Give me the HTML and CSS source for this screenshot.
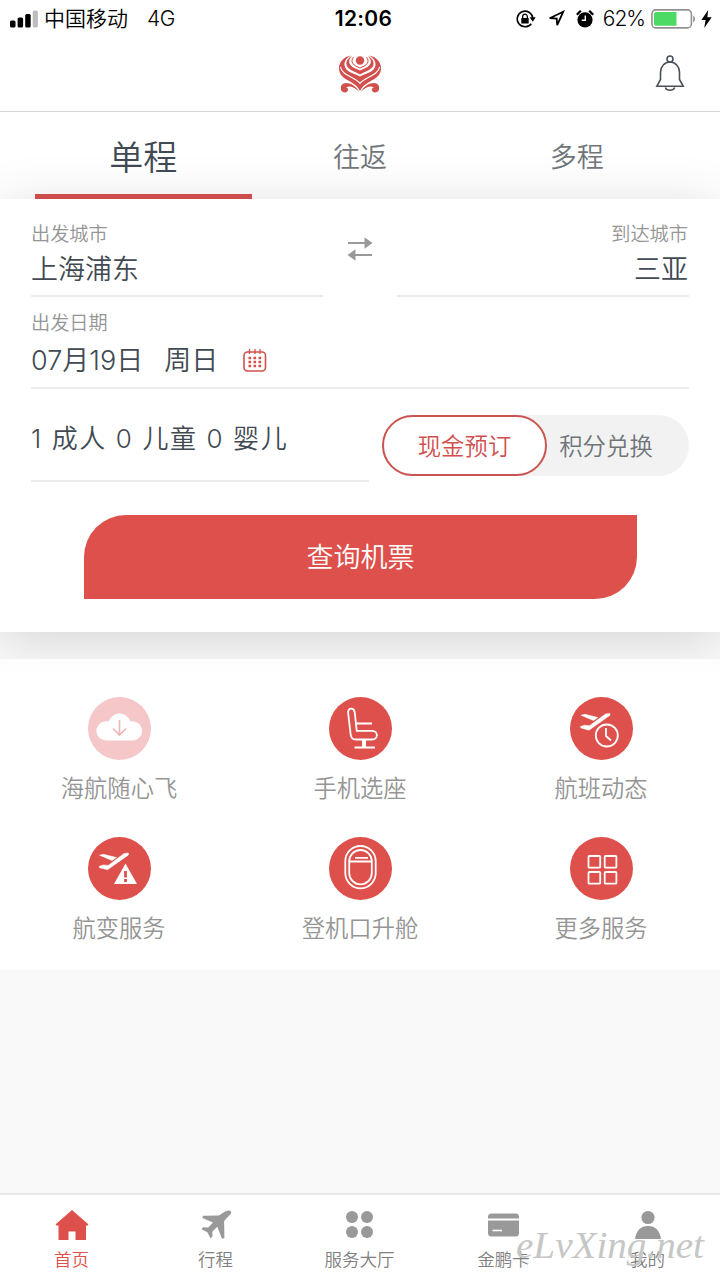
FILE: index.html
```html
<!DOCTYPE html>
<html lang="zh-CN">
<head>
<meta charset="utf-8">
<title>机票预订</title>
<link rel="stylesheet" href="styles.css">
</head>
<body>
<div class="app">
  <div class="status">
    <div class="status-left">
      <svg class="signal" width="28" height="18" viewBox="0 0 28 18"><rect x="0" y="10.5" width="5.5" height="7" rx="1.6"/><rect x="7.6" y="7.5" width="5.5" height="10" rx="1.6"/><rect x="15.2" y="4" width="5.5" height="13.5" rx="1.6"/><rect x="22.7" y="0.5" width="5.2" height="17" rx="1.6" fill="#bdbdbd"/></svg>
      <span class="carrier">中国移动</span>
      <span class="network">4G</span>
    </div>
    <div class="time">12:06</div>
    <div class="status-right">
      <svg width="20" height="18" viewBox="0 0 20 18" fill="none" stroke="#000" stroke-width="1.6"><path d="M15.3 13.7A7.8 7.8 0 1 1 16.8 8"/><path d="M13.7 7.3h6l-3 4.4z" fill="#000" stroke="none"/><rect x="5.3" y="8" width="7.4" height="5.6" rx=".6" fill="#000" stroke="none"/><path d="M6.7 8.2V6.5a2.3 2.3 0 0 1 4.6 0v1.7" stroke-width="1.3"/></svg>
      <svg class="locate" width="17" height="17" viewBox="0 0 17 17" fill="none" stroke="#000" stroke-width="1.8"><path d="M1.7 8.2 15.2 1.8 9.2 15.2 8.7 8.5z"/></svg>
      <svg class="alarm" width="18" height="18" viewBox="0 0 18 18"><circle cx="9" cy="9.8" r="7.6"/><path d="M.8 4.8 4.8.8M13.2.8l4 4" stroke="#000" stroke-width="2.3"/><path d="M9.3 5.5v4.8H5.8" fill="none" stroke="#fff" stroke-width="1.4"/></svg>
      <span class="percent">62%</span>
      <svg class="battery" width="45" height="20" viewBox="0 0 45 20"><rect x=".9" y=".9" width="39.5" height="18" rx="4" fill="#fff" stroke="#929292" stroke-width="1.6"/><path d="M5 3h20.5v13.7H5a2 2 0 0 1-2-2V5a2 2 0 0 1 2-2z" fill="#4cd964"/><path d="M42.2 6.5a4.2 4.2 0 0 1 0 7z" fill="#929292"/></svg>
      <svg width="11" height="18" viewBox="0 0 11 18"><path d="M7.2 0 .4 10h4.2L3.2 18 10.7 7.3H6.3z"/></svg>
    </div>
  </div>
  <header class="header">
    <svg class="logo" width="44" height="40" viewBox="0 0 44 40" fill="#d1504e">
      <path d="M13 1.500C5 3 .8 8.500 1 15c.3 6.500 5.500 9.500 11 12.500 4.500 2.500 8 5 10 9.500 2-4.500 5.500-7 10-9.500 5.500-3 10.700-6 11-12.500C43.200 8.500 39 3 31 1.500c4.500 2.500 7 6 6.500 10C36.500 18.500 27 19.500 22 22.500c-5-3-14.500-4-15.500-11-.5-4 2-7.500 6.500-10z"/>
      <path d="M2.500 13c1.500 9 14 9.500 19.500 16.500C27.500 22.500 40 22 41.500 13" fill="none" stroke="#fff" stroke-width="1.200"/>
      <path d="M14 2c-4 2-6 5-5.500 8.500C9.500 16 17.500 17.500 22 20.500c4.500-3 12.500-4.500 13.500-10C36 7 34 4 30 2c2.500 2.500 3.500 5 2.500 7.500-1.500 4-7 5-10.500 7-3.500-2-9-3-10.500-7C10.500 7 11.500 4.500 14 2z"/>
      <path d="M15.500 3c-1.500 2-2 4-1 6 1.500 3 5 3.500 7.500 5 2.500-1.500 6-2 7.500-5 1-2 .5-4-1-6" fill="none" stroke="#d1504e" stroke-width="1"/>
      <circle cx="22" cy="6.500" r="4.200"/>
      <path d="M21 37.500C17.500 31 10 27.500 5.500 29.500 1.500 31.300 2 38 6.500 38.500c4 .3 5-4.500 1.500-5 4-2.500 8.500 0 13 4zM23 37.500c3.500-6.500 11-10 15.500-8 4 1.800 3.500 8.500-1 9-4 .3-5-4.500-1.500-5-4-2.500-8.500 0-13 4z"/>
    </svg>
    <svg class="bell" width="30" height="38" viewBox="0 0 30 38" fill="none" stroke="#48515a" stroke-width="1.600"><circle cx="15" cy="4" r="3"/><path d="M1.800 31.300 5.500 24.500V17a9.500 10 0 0 1 19 0v7.500l3.700 6.800zM10.300 32.500a5 4.200 0 0 0 9.400 0"/></svg>
  </header>
  <nav class="tabs">
    <div class="tab tab-on">单程</div>
    <div class="tab">往返</div>
    <div class="tab">多程</div>
  </nav>
  <section class="card">
    <div class="route">
      <div class="field city">
        <div class="label">出发城市</div>
        <div class="value">上海浦东</div>
      </div>
      <svg class="swap" width="26" height="26" viewBox="0 0 26 26"><path d="M1 7h18M7 19h18" stroke="#999" stroke-width="1.800"/><path d="M17.500 1.300 25.500 7l-8 5.700zM8.500 13.300.5 19l8 5.700z" fill="#999"/></svg>
      <div class="field city city-to">
        <div class="label">到达城市</div>
        <div class="value">三亚</div>
      </div>
    </div>
    <div class="field date">
      <div class="label">出发日期</div>
      <div class="value value-date"><span>07月19日</span><span class="weekday">周日</span>
        <svg class="calendar" width="24" height="24" viewBox="0 0 24 24" fill="none" stroke="#d1504e"><rect x="1" y="3" width="21.500" height="19" rx="3.500" stroke-width="1.600"/><path d="M6.500 0v5M12 0v5M17 0v5" stroke-width="1.300"/><path d="M5.500 9h13M5.500 13h13M5.500 17h13" stroke-width="2.400" stroke-dasharray="2.600 2.400"/></svg>
      </div>
    </div>
    <div class="passenger-row">
      <div class="passengers">1 成人 0 儿童 0 婴儿</div>
      <div class="toggle">
        <div class="option option-on">现金预订</div>
        <div class="option">积分兑换</div>
      </div>
    </div>
    <div class="search">查询机票</div>
  </section>
  <section class="services">
    <div class="service">
      <svg class="disc" viewBox="0 0 63 63"><circle cx="31.500" cy="31.500" r="31.500" fill="#f5c7c8"/><path d="M18.500 43.500a9.500 9.500 0 0 1-1-19.200h3.200a11.500 11.500 0 0 1 21.800 0h2a9.600 9.600 0 0 1 0 19.200z" fill="#fff"/><path d="M31.500 23v14.500M25 31.500l6.500 6.500 6.500-6.500" fill="none" stroke="#efb5b6" stroke-width="1.600"/></svg>
      <span>海航随心飞</span>
    </div>
    <div class="service">
      <svg class="disc" viewBox="0 0 63 63"><circle cx="31.500" cy="31.500" r="31.500" fill="#de504b"/><g fill="none" stroke="#fff" stroke-width="1.800"><path d="M19.200 16.500c-1-6 5.500-6.500 6.500-1.500l2 18.800H43c6.500 0 6.500 8.700 0 8.700H26.500c-3.300 0-4.300-2-4.800-4.700zM27 26.500h16M25.500 50.500h20.500"/></g><path d="M33 42.500h4v8h-4z" fill="#fff"/></svg>
      <span>手机选座</span>
    </div>
    <div class="service">
      <svg class="disc" viewBox="0 0 63 63"><circle cx="31.500" cy="31.500" r="31.500" fill="#de504b"/><path d="M11 18.200 15 17.300l13 3.200-4.500 3zM10.500 29.500l4-1.300 5 .5L35.500 17l4.500-.6v1.800L19 33.200 11 31z" fill="#fff" stroke="#fff" stroke-width=".5"/><circle cx="36.800" cy="38.500" r="11" fill="#de504b" stroke="#fff" stroke-width="1.800"/><path d="M36 31v8l5 4.500" fill="none" stroke="#fff" stroke-width="1.800"/></svg>
      <span>航班动态</span>
    </div>
    <div class="service">
      <svg class="disc" viewBox="0 0 63 63"><circle cx="31.500" cy="31.500" r="31.500" fill="#de504b"/><path d="M11.500 18.200 15.500 17.300l13 3.200-4.500 3zM11.300 29.200l4-1.300 5 .5L36 16.500l4.500-.4v1.800L19.500 32.700 11.500 30.700z" fill="#fff" stroke="#fff" stroke-width=".5"/><path d="M37.500 26.500 49 47H26z" fill="#fff"/><path d="M37.500 34v6.500M37.500 42v3" stroke="#de504b" stroke-width="2.800"/></svg>
      <span>航变服务</span>
    </div>
    <div class="service">
      <svg class="disc" viewBox="0 0 63 63"><circle cx="31.500" cy="31.500" r="31.500" fill="#de504b"/><g fill="none" stroke="#fff" stroke-width="1.800"><rect x="16.300" y="9" width="30.400" height="42.300" rx="15.200"/><rect x="20.200" y="13" width="22.600" height="34.300" rx="11.300"/><path d="M20.200 24.500h22.600M26 20.800h13"/></g></svg>
      <span>登机口升舱</span>
    </div>
    <div class="service">
      <svg class="disc" viewBox="0 0 63 63"><circle cx="31.500" cy="31.500" r="31.500" fill="#de504b"/><g fill="none" stroke="#fff" stroke-width="1.800"><rect x="18.500" y="19" width="11.700" height="11.700" rx="1"/><rect x="34.700" y="19" width="11.700" height="11.700" rx="1"/><rect x="18.500" y="35" width="11.700" height="11.700" rx="1"/><rect x="34.700" y="35" width="11.700" height="11.700" rx="1"/></g></svg>
      <span>更多服务</span>
    </div>
  </section>
  <footer class="bottom">
    <div class="item item-on">
      <svg width="34" height="32" viewBox="0 0 34 32" fill="#de504b"><path d="M17 1 33.300 15.300l-.5 1.200H31V31H20.500v-8.500h-7V31H3.500V16.500H1.200l-.5-1.200z"/></svg>
      <span>首页</span>
    </div>
    <div class="item">
      <svg width="34" height="32" viewBox="0 0 34 32" fill="#999"><path d="M31.800 2.200c.8.900.4 2.200-.7 3.400l-6 6.400.3 17-2.400.8-4.700-12-5 5 .2 4.800-2 1.600-3.200-6-5.800-3 1.600-2 5 .2 4.900-5L3.300 9l.8-2.300 15.700-.2 6.800-4.200c2.300-.9 4.400-1.100 5.200-.1z"/></svg>
      <span>行程</span>
    </div>
    <div class="item">
      <svg width="34" height="32" viewBox="0 0 34 32" fill="#999"><circle cx="9" cy="8" r="6"/><circle cx="24" cy="8" r="6"/><circle cx="9" cy="23" r="6"/><circle cx="24" cy="23" r="6"/></svg>
      <span>服务大厅</span>
    </div>
    <div class="item">
      <svg width="34" height="32" viewBox="0 0 34 32" fill="#999"><path d="M4.500 4.500h24a3.500 3.500 0 0 1 3.500 3.500v1.500H1V8a3.500 3.500 0 0 1 3.500-3.500zM1 11.500h31V24a3.500 3.500 0 0 1-3.500 3.500h-24A3.500 3.500 0 0 1 1 24z"/><path d="M5.500 21.500H15" stroke="#fff" stroke-width="1.600"/></svg>
      <span>金鹏卡</span>
    </div>
    <div class="item">
      <svg width="34" height="32" viewBox="0 0 34 32" fill="#999"><circle cx="17" cy="8.500" r="6.600"/><path d="M4 30c1-8.500 6-13 13-13s12 4.500 13 13z"/></svg>
      <span>我的</span>
    </div>
    <svg class="watermark" width="210" height="64" viewBox="0 0 210 64"><text x="6" y="42" textLength="188" lengthAdjust="spacingAndGlyphs">eLvXing.net</text></svg>
  </footer>
</div>
</body>
</html>
```
FILE: styles.css
```css
* { box-sizing: border-box; }
body {
  margin: 0;
  background: #fff;
  color: #414a52;
  font-family: Inter, "Noto Sans CJK SC", sans-serif;
  font-weight: 350;
}
svg { display: block; flex: none; }
.app {
  display: flex;
  flex-direction: column;
  width: 720px;
  height: 1280px;
  overflow: hidden;
  background: #f9f9f9;
}
.status {
  display: grid;
  grid-template-columns: 1fr auto 1fr;
  align-items: center;
  height: 37px;
  padding: 0 8px 0 10px;
  background: #fff;
  color: #000;
  font-size: 21px;
  line-height: 36px;
}
.status-left, .status-right { display: flex; align-items: center; }
.status-right { justify-content: flex-end; }
.carrier { margin-left: 6px; }
.network { margin-left: 19px; letter-spacing: -.5px; }
.time { padding-left: 5px; font-size: 21px; font-weight: 600; letter-spacing: .3px; }
.locate { margin-left: 12px; }
.alarm { margin-left: 11px; }
.percent { margin: 0 6px 0 9px; letter-spacing: -1px; }
.battery { margin-right: 5px; }
.header {
  display: grid;
  grid-template-columns: 1fr auto 1fr;
  align-items: center;
  height: 75px;
  padding: 0 35px 1px;
  border-bottom: 1px solid #d2d4d5;
  background: #fff;
}
.logo { grid-column: 2; }
.bell { justify-self: end; }
.tabs {
  display: grid;
  grid-template-columns: repeat(3, 1fr);
  grid-template-rows: 87px;
  height: 87px;
  padding: 0 35px;
  background: #fff;
}
.tab {
  position: relative;
  z-index: 2;
  padding-top: 2px;
  color: #70757a;
  font-size: 27px;
  line-height: 88px;
  text-align: center;
}
.tab-on {
  border-bottom: 5px solid #cc4d4b;
  color: #414a52;
  font-size: 34px;
}
.card {
  position: relative;
  z-index: 1;
  height: 433px;
  padding: 21px 31px 0;
  background: #fff;
  box-shadow: 0 8px 50px rgba(0, 0, 0, .15);
}
.route { display: flex; justify-content: space-between; }
.field { border-bottom: 2px solid #ececec; }
.city { width: 292px; height: 77px; }
.city-to { text-align: right; }
.city-to .label, .city-to .value { margin-right: 1px; }
.swap { margin-top: 16px; }
.label { color: #959595; font-size: 19.2px; line-height: 29px; }
.value { font-size: 27px; line-height: 42px; }
.date { height: 92px; padding-top: 12px; }
.value-date { display: flex; align-items: center; padding-top: 2px; }
.weekday { margin-left: 21px; }
.calendar { margin-left: 25px; }
.passenger-row { display: flex; justify-content: space-between; }
.passengers {
  width: 338px;
  height: 93px;
  border-bottom: 2px solid #ececec;
  font-size: 26px;
  letter-spacing: 1.6px;
  line-height: 99px;
  white-space: pre;
}
.toggle {
  display: flex;
  width: 307px;
  height: 61px;
  margin-top: 26px;
  border-radius: 31px;
  background: #f2f2f2;
}
.option {
  width: 118px;
  color: #70757a;
  font-size: 23.4px;
  line-height: 63px;
  text-align: center;
}
.option-on {
  width: 165px;
  border: 2px solid #cc5450;
  border-radius: 31px;
  background: #fff;
  color: #d1504e;
  line-height: 59px;
}
.search {
  width: 553px;
  height: 84px;
  margin: 33px 0 0 53px;
  border-radius: 42px 0;
  background: #de504b;
  color: #fff;
  font-size: 27px;
  line-height: 86px;
  text-align: center;
}
.services {
  position: relative;
  z-index: 2;
  display: grid;
  grid-template-columns: 238px 244px 238px;
  grid-auto-rows: 140px;
  height: 338px;
  padding-top: 65px;
  background: linear-gradient(transparent 27px, #fdfdfd 27px, #fff 50px);
}
.service {
  display: flex;
  flex-direction: column;
  align-items: center;
  color: #959595;
  font-size: 23.3px;
}
.service span { margin-top: 11px; line-height: 36px; }
.disc { width: 63px; height: 63px; }
.bottom {
  position: relative;
  display: grid;
  grid-template-columns: repeat(5, 144px);
  height: 87px;
  margin-top: auto;
  padding-top: 14px;
  border-top: 2px solid #e8e8e8;
  background: #fff;
}
.item {
  display: flex;
  flex-direction: column;
  align-items: center;
  padding-right: 1px;
  color: #808080;
  font-size: 17.5px;
}
.item span { margin-top: 7px; line-height: 24px; }
.item-on { color: #de504b; }
.watermark { position: absolute; right: 0; bottom: 0; }
.watermark text {
  fill: #c6c6c6;
  font-family: "Liberation Serif", serif;
  font-size: 37px;
  font-style: italic;
}
```
